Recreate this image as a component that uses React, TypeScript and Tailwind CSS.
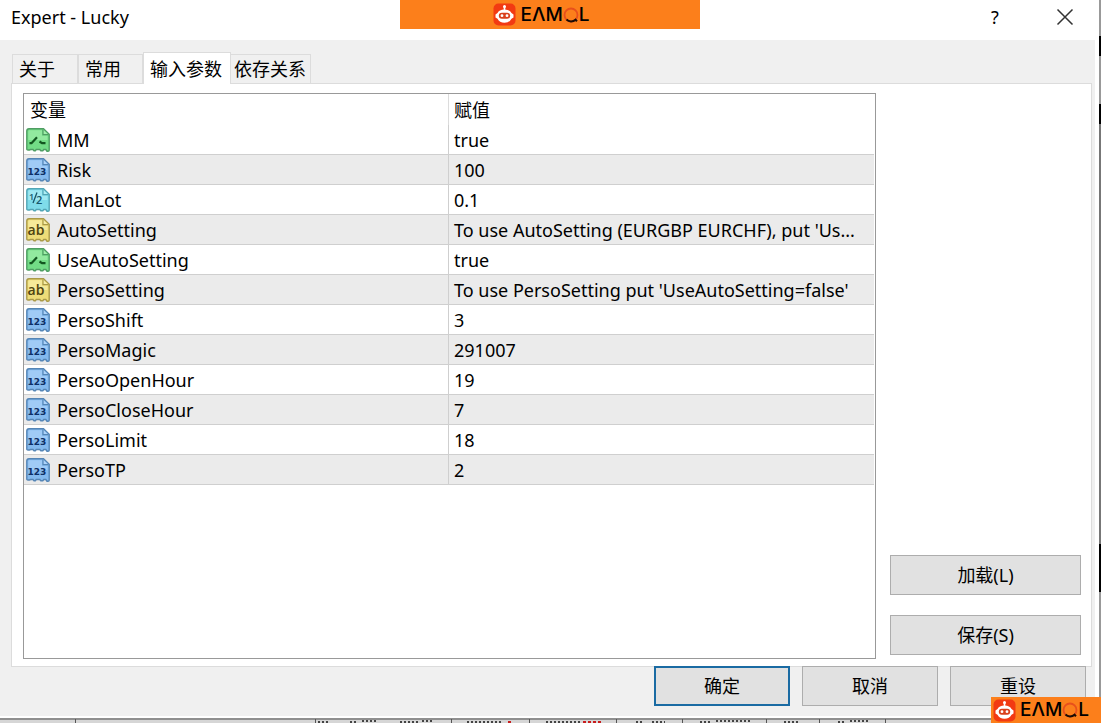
import React, { useState } from 'react';

type ParamType = 'bool' | 'int' | 'double' | 'string';

interface Param {
  name: string;
  type: ParamType;
  value: string;
}

const params: Param[] = [
  { name: 'MM', type: 'bool', value: 'true' },
  { name: 'Risk', type: 'int', value: '100' },
  { name: 'ManLot', type: 'double', value: '0.1' },
  { name: 'AutoSetting', type: 'string', value: "To use AutoSetting (EURGBP EURCHF), put 'Us..." },
  { name: 'UseAutoSetting', type: 'bool', value: 'true' },
  { name: 'PersoSetting', type: 'string', value: "To use PersoSetting put 'UseAutoSetting=false'" },
  { name: 'PersoShift', type: 'int', value: '3' },
  { name: 'PersoMagic', type: 'int', value: '291007' },
  { name: 'PersoOpenHour', type: 'int', value: '19' },
  { name: 'PersoCloseHour', type: 'int', value: '7' },
  { name: 'PersoLimit', type: 'int', value: '18' },
  { name: 'PersoTP', type: 'int', value: '2' },
];

const tabs = [
  { label: '关于', className: 'w-[66px]' },
  { label: '常用', className: 'w-[65px]' },
  { label: '输入参数', className: 'w-[88px]' },
  { label: '依存关系', className: 'w-[80px]' },
];

const iconColors: Record<ParamType, { fill: string; light: string; edge: string; ink: string }> = {
  bool: { fill: '#72dc86', light: '#a0eeaa', edge: '#4f9d63', ink: '#12551f' },
  int: { fill: '#83b9ee', light: '#acd3fa', edge: '#5585b5', ink: '#0d2f66' },
  double: { fill: '#7fdcea', light: '#aeeef5', edge: '#52a5b5', ink: '#17566b' },
  string: { fill: '#eedd78', light: '#f8eea6', edge: '#aa9a48', ink: '#4d4310' },
};

const ParamIcon: React.FC<{ type: ParamType }> = ({ type }) => {
  const c = iconColors[type];
  return (
    <svg width="24" height="24" viewBox="0 0 24 24" className="shrink-0" aria-hidden="true">
      <path
        d="M3 .8h14.500l5.700 5.400v16q0 1-1.200 1h-1l-1.200-1.700h-2l-1 1.200h-2l-1-1.200h-3.500l-1 1.200H8l-1-1.200H4.500l-1 .5H2Q.8 22 .8 21V3Q.8.8 3 .8z"
        fill={c.fill}
        stroke={c.edge}
        strokeWidth="1.400"
      />
      <path d="M3 2.300h13v5.500h5.500V12H2.300V3.500z" fill={c.light} opacity=".7" />
      <path d="M17 1.500v5.200h5.500" fill={c.light} stroke={c.edge} strokeWidth="1.200" />
      {type === 'bool' && (
        <path d="M3.500 15.200h2l5.500-6M13.500 13.500l2.500 1.700h3.500" fill="none" stroke={c.ink} strokeWidth="2.200" />
      )}
      {type === 'int' && (
        <text x="11" y="17" textAnchor="middle" fontSize="9" fontWeight="700" fontFamily="DejaVu Sans" fill={c.ink}>
          123
        </text>
      )}
      {type === 'double' && (
        <>
          <text x="3" y="11.500" fontSize="9" fontWeight="600" fontFamily="Open Sans" fill={c.ink}>1</text>
          <path d="M11 4.500L7 15" stroke={c.ink} strokeWidth="1.300" />
          <text x="10" y="15.500" fontSize="11" fontWeight="600" fontFamily="Open Sans" fill={c.ink}>2</text>
        </>
      )}
      {type === 'string' && (
        <text x="10" y="17" textAnchor="middle" fontSize="14" fontWeight="600" fontFamily="Open Sans" fill={c.ink}>
          ab
        </text>
      )}
    </svg>
  );
};

const Brand: React.FC = () => (
  <div className="flex items-center gap-1 text-black" role="img" aria-label="EAMOL">
    <svg width="23" height="23" viewBox="0 0 23 23">
      <rect x=".5" y=".5" width="22" height="22" rx="5" fill="#f23a12" />
      <path d="M11.500 3v5" stroke="#fff" strokeWidth="1.600" />
      <circle cx="11.500" cy="3.500" r="1.500" fill="#fff" />
      <path d="M4.500 10Q6 6.500 11.500 6.500T18.500 10l2 1.500v3l-2 1.300q-2 4-7 4t-7-4l-2-1.300v-3z" fill="#fff" />
      <rect x="5.800" y="9.700" width="11.400" height="6" rx="3" fill="#d9401c" />
      <circle cx="9" cy="12.700" r="1.400" fill="#fff" />
      <circle cx="14" cy="12.700" r="1.400" fill="#fff" />
    </svg>
    <div className="flex items-center font-['Inter',sans-serif] text-[19px] leading-6 font-medium">
      <span>EΛM</span>
      <svg width="16" height="16" viewBox="0 0 16 16">
        <circle cx="8" cy="8" r="6.500" fill="none" stroke="#e8501c" strokeWidth="1.800" />
        <path d="M3.500 12.500a6.500 6.500 0 0 0 9 .2l1.500 1.500" fill="none" stroke="#1c0d05" strokeWidth="2" />
      </svg>
      <span>L</span>
    </div>
  </div>
);

const buttonStyle = 'h-10 bg-[#e1e1e1] text-center text-lg leading-6 hover:bg-[#e5f1fb]';

export default function App() {
  const [activeTab, setActiveTab] = useState('输入参数');

  return (
    <div className="relative flex min-h-screen flex-col overflow-hidden bg-[#a3a3a3] font-['Noto_Sans','Noto_Sans_CJK_SC',sans-serif] text-black">
      <div className="flex flex-1">
        <main className="flex flex-1 flex-col bg-white pr-1 pb-0.5">
          <header className="flex h-10 items-center justify-between pr-[18px] pb-1.5 pl-[11px]">
            <h1 className="text-lg leading-6">Expert - Lucky</h1>
            <div className="flex items-center gap-[46px]">
              <button type="button" aria-label="Help" className="w-6 text-lg leading-6">?</button>
              <button type="button" aria-label="Close" className="flex w-6 justify-center">
                <svg width="18" height="18" viewBox="0 0 18 18">
                  <path d="M1.500 1.500l15 15M16.500 1.500l-15 15" stroke="#333" strokeWidth="1.500" />
                </svg>
              </button>
            </div>
          </header>

          <div className="flex flex-1 flex-col bg-[#f0f0f0] pt-3 pr-[3px] pb-2.5 pl-[11px]">
            <div className="flex items-end pl-px" role="tablist">
              {tabs.map((tab) => (
                <button
                  key={tab.label}
                  type="button"
                  role="tab"
                  aria-selected={activeTab === tab.label}
                  onClick={() => setActiveTab(tab.label)}
                  className={`${tab.className} border border-b-0 border-[#dcdcdc] pl-1.5 text-left text-lg leading-6 whitespace-nowrap ${
                    activeTab === tab.label ? 'relative -mb-px h-8 bg-white' : 'h-[29px]'
                  } ${tab.label === '依存关系' ? 'border-l-0 pl-[3px]' : ''}`}
                >
                  {tab.label}
                </button>
              ))}
            </div>

            <section className="flex flex-1 gap-3.5 border border-[#dcdcdc] bg-white p-2.5 pt-[9px] pb-[7px] pl-[11px]">
              <div className="flex-1 border border-[#999] pr-px">
                <table className="w-full table-fixed border-separate border-spacing-0 leading-6">
                  <thead className="text-lg leading-6">
                    <tr className="h-[31px]">
                      <th className="w-1/2 border-r border-[#dcdcdc] pl-1.5 text-left font-normal">变量</th>
                      <th className="w-1/2 pl-[5px] text-left font-normal">赋值</th>
                    </tr>
                  </thead>
                  <tbody className="text-lg leading-6">
                    {params.map((p) => (
                      <tr key={p.name} className="h-[30px] even:bg-[#ebebeb]">
                        <td className="border-r border-b border-[#cfcfcf] pl-0.5">
                          <div className="flex items-center gap-[7px]">
                            <ParamIcon type={p.type} />
                            {p.name}
                          </div>
                        </td>
                        <td className="border-b border-[#cfcfcf] pl-[5px] whitespace-nowrap">{p.value}</td>
                      </tr>
                    ))}
                  </tbody>
                </table>
              </div>
              <div className="flex w-[191px] flex-col justify-end gap-5 pb-1">
                <button type="button" className={`${buttonStyle} border border-[#adadad]`}>加载(L)</button>
                <button type="button" className={`${buttonStyle} border border-[#adadad]`}>保存(S)</button>
              </div>
            </section>

            <footer className="relative -mt-px flex justify-end gap-3 pr-1.5">
              <button type="button" className={`${buttonStyle} w-[136px] border-2 border-[#1a6ba3]`}>确定</button>
              <button type="button" className={`${buttonStyle} w-[136px] border border-[#adadad]`}>取消</button>
              <button type="button" className={`${buttonStyle} w-[136px] border border-[#adadad]`}>重设</button>
            </footer>
          </div>
        </main>

        {/* sliver of the window behind the dialog */}
        <div className="flex w-0.5 flex-col bg-[#999]">
          <div className="h-9" />
          <div className="h-5 bg-black" />
          <div className="h-12" />
          <div className="h-5 bg-black" />
          <div className="h-[420px] bg-[#777]" />
          <div className="h-12 bg-black" />
        </div>
      </div>

      <svg className="h-[5px] w-full bg-[#d6d6d6]" aria-hidden="true">
        <path d="M0 1h1101" stroke="#8f8f8f" strokeWidth="2" />
        <path d="M75.500 1v4M315.500 1v4M451.500 1v4M529.500 1v4M616.500 1v4M682.500 1v4M766.500 1v4M819.500 1v4M885.500 1v4" stroke="#555" />
        <path d="M318 4h12M350 4h8M362 3h14M400 4h18M422 3h12M467 4h34M546 4h34M636 4h8M652 4h13M700 4h12M716 3h34M784 4h16M838 4h8M850 3h20" stroke="#444" strokeWidth="2" strokeDasharray="2 2" />
        <path d="M508 4h5M583 4h18" stroke="#c81e1e" strokeWidth="2" strokeDasharray="3 2" />
      </svg>

      <div className="absolute top-0 left-[400px] flex h-[29px] w-[300px] items-center justify-center bg-[#fc7f1b] pr-[17px]">
        <Brand />
      </div>
      <div className="absolute right-0 bottom-0 flex h-[26px] w-[110px] items-center bg-[#fc7f1b] pl-0.5">
        <Brand />
      </div>
    </div>
  );
}
